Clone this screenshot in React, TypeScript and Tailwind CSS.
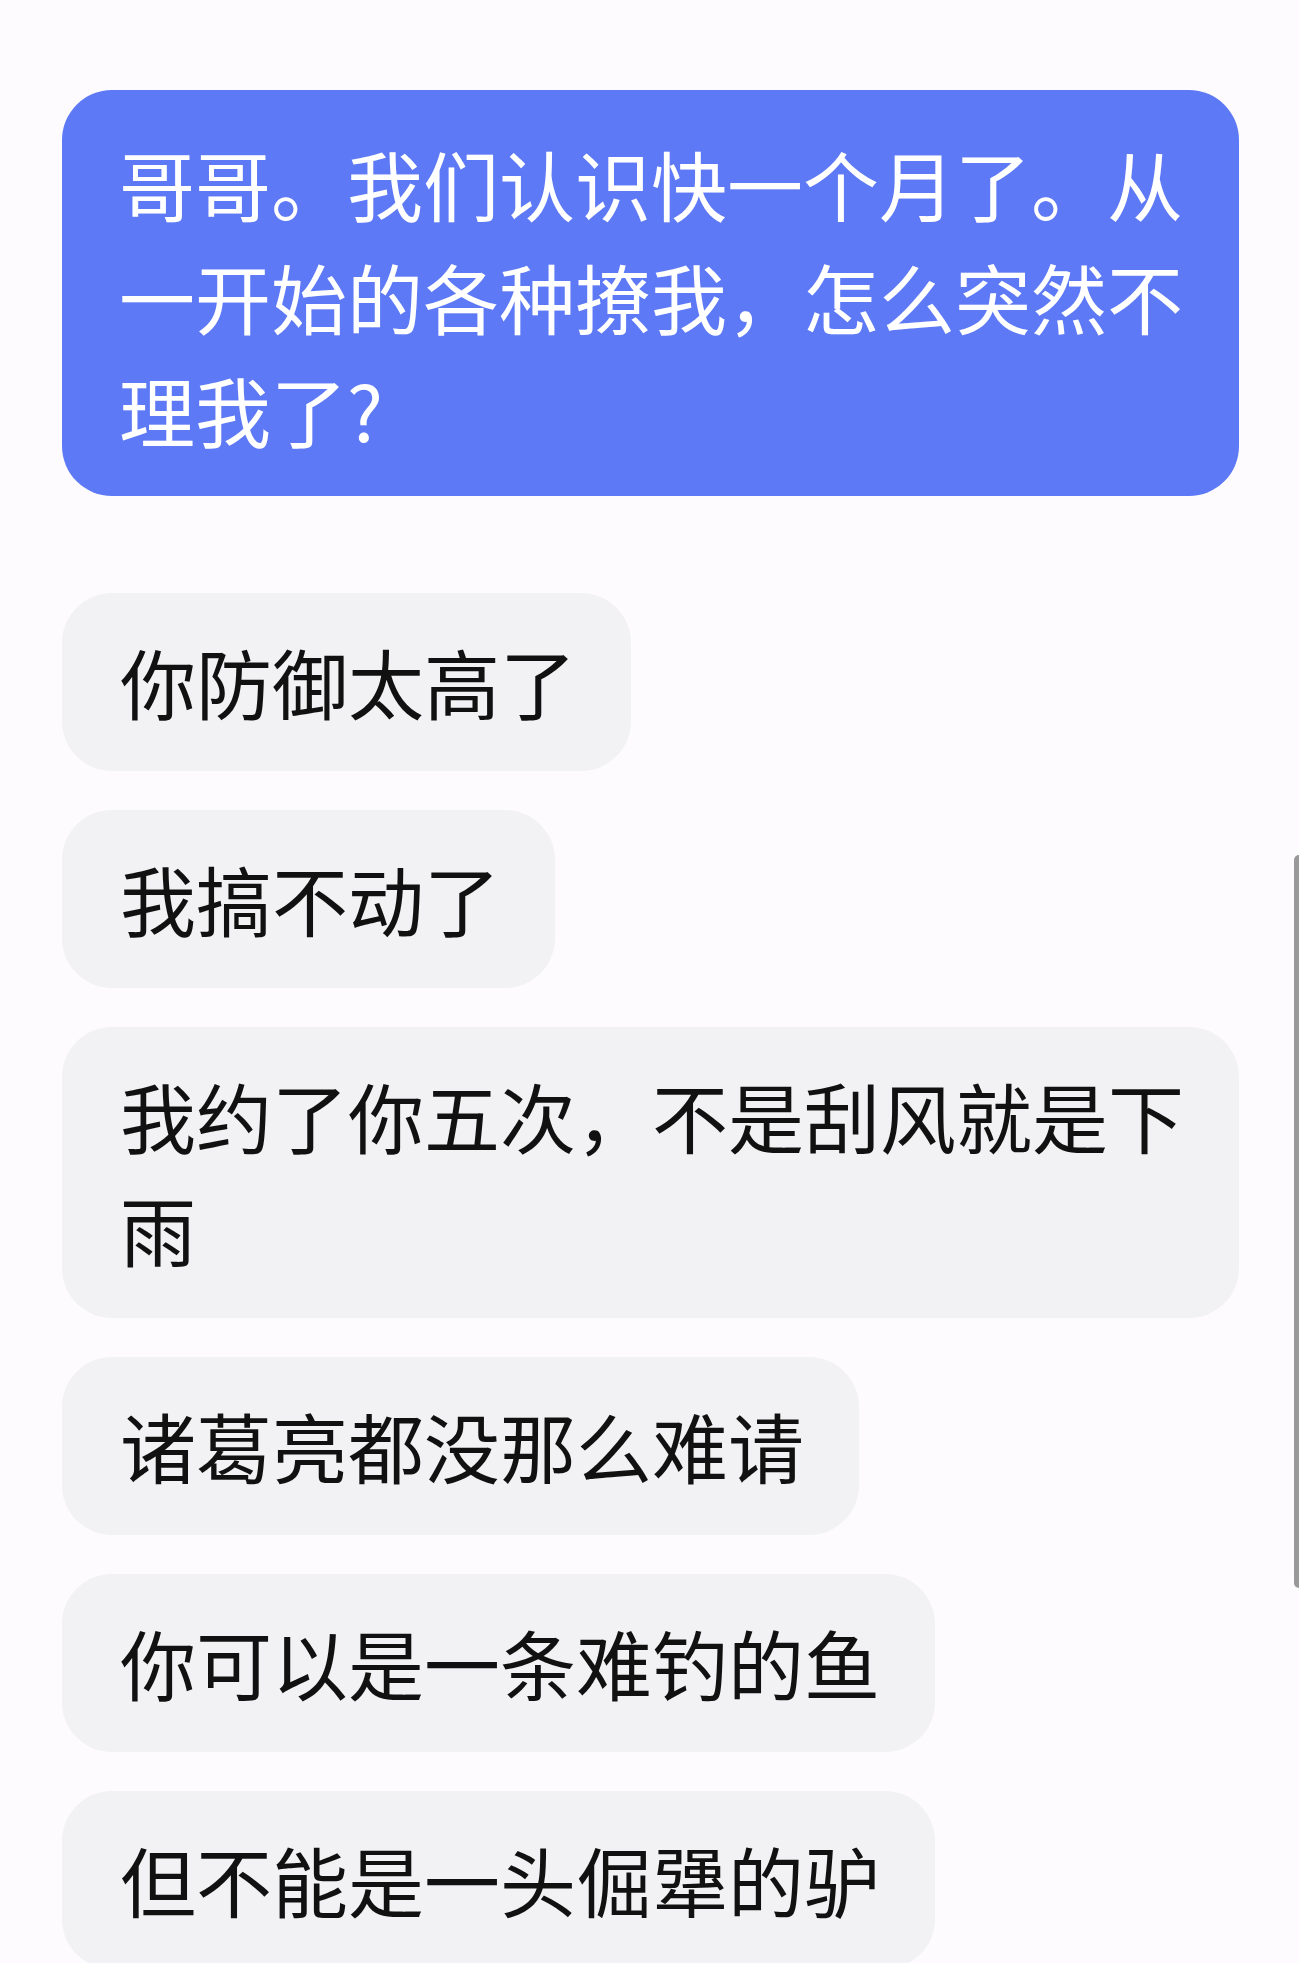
const messages = [
  "你防御太高了",
  "我搞不动了",
  "我约了你五次，不是刮风就是下雨",
  "诸葛亮都没那么难请",
  "你可以是一条难钓的鱼",
  "但不能是一头倔犟的驴",
];

const App = () => {
  return (
    <div
      className="relative min-h-screen h-[1963px] overflow-hidden bg-[#fdfbfd] text-[76px] leading-[113px]"
      style={{ fontFamily: '"Noto Sans CJK SC", "Noto Sans", sans-serif' }}
    >
      <div className="flex flex-col items-start pl-[62px] pr-[60px] pt-[90px]">
        {/* Outgoing message */}
        <div className="w-full rounded-[50px] bg-[#5d79f6] pl-[57px] pr-[48px] pt-[37px] pb-[30px] text-white">
          哥哥。我们认识快一个月了。从一开始的各种撩我，怎么突然不理我了?
        </div>

        {/* Replies */}
        <div className="mt-[97px] flex w-full flex-col items-start gap-[39px]">
          {messages.map((text) => (
            <div
              key={text}
              className="max-w-full rounded-[50px] bg-[#f2f1f3] pl-[58px] pr-[55px] pt-[32px] pb-[33px] text-[#111111]"
            >
              {text}
            </div>
          ))}
        </div>
      </div>

      {/* Scrollbar thumb */}
      <div className="absolute right-0 top-[855px] h-[733px] w-[5px] rounded-l-full bg-[#999999]" />
    </div>
  );
};

export default App;
